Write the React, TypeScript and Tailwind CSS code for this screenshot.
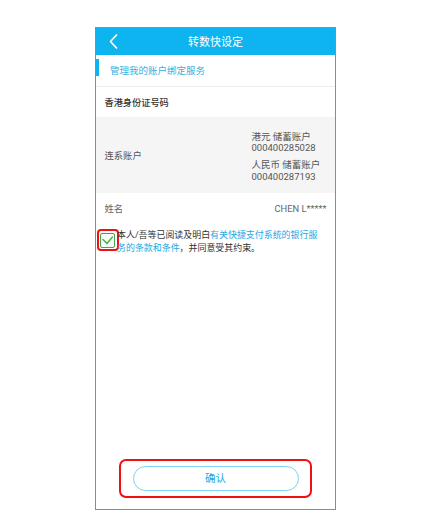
import React from "react";

export default function App() {
  return (
    <div className="w-[438px] h-[510px] bg-white pt-[27px] pl-[95px] font-[Roboto,'Noto_Sans_CJK_SC',sans-serif]">
      <div className="w-[241px] h-[483px] border-[1.5px] border-[#8c8c8c] flex flex-col bg-white">
        {/* Header */}
        <div className="h-[27px] shrink-0 bg-[#0db4ef] grid grid-cols-[1fr_auto_1fr] items-center">
          <div className="pl-[13px] flex items-center">
            <svg width="9" height="15" viewBox="0 0 9 15" fill="none">
              <path d="M7.5 1 L1.5 7.5 L7.5 14" stroke="white" strokeWidth="1.7" strokeLinecap="round" strokeLinejoin="round" />
            </svg>
          </div>
          <div className="text-white text-[11px] leading-[14px] pt-[2px]">转数快设定</div>
          <div />
        </div>

        {/* Sub header */}
        <div className="h-[32px] shrink-0 flex items-start pt-[4px] border-b border-[#ececec]">
          <div className="w-[3px] h-[17px] bg-[#0db4ef]" />
          <div className="ml-[11px] mt-[6px] text-[9.5px] leading-[12px] text-[#3aafe0]">管理我的账户绑定服务</div>
        </div>

        {/* ID row */}
        <div className="h-[30px] shrink-0 flex items-center pt-[2px] pl-[8.5px] text-[9.2px] text-[#333] font-medium">香港身份证号码</div>

        {/* Linked accounts */}
        <div className="bg-[#f5f5f5] flex items-center pl-[8.5px] pt-[13.5px] pb-[10.5px]">
          <div className="w-[147px] text-[9.3px] text-[#555]">连系账户</div>
          <div className="flex flex-col gap-[5px] text-[9.5px] leading-[11.7px] text-[#555]">
            <div>
              <div>港元 储蓄账户</div>
              <div>000400285028</div>
            </div>
            <div>
              <div>人民币 储蓄账户</div>
              <div>000400287193</div>
            </div>
          </div>
        </div>

        {/* Name row */}
        <div className="h-[30px] shrink-0 flex items-center justify-between pt-[2px] pl-[8.5px] pr-[8.5px] text-[9.3px] text-[#666]">
          <span>姓名</span>
          <span>CHEN L*****</span>
        </div>

        {/* Agreement */}
        <div className="flex items-start pt-[6.5px]">
          <div className="ml-[1px] w-[21.5px] h-[22px] border-2 border-[#ee1111] rounded-[4px] flex items-center justify-center shrink-0">
            <div className="w-[15px] h-[15px] border-[1.5px] border-[#4f9f5a] rounded-[2px] bg-[#f4fbf4] flex items-center justify-center">
              <svg width="11" height="9" viewBox="0 0 11 9" fill="none">
                <path d="M1 3.5 L5 7.5 L10.5 1" stroke="#4caf50" strokeWidth="1.5" strokeLinecap="round" strokeLinejoin="round" />
              </svg>
            </div>
          </div>
          <p className="ml-[-1.5px] mt-[-0.5px] text-[8.95px] leading-[13px] text-[#333] whitespace-nowrap">
            本人/吾等已阅读及明白<span className="text-[#1ea7e1]">有关快捷支付系统的银行服</span>
            <br />
            <span className="text-[#1ea7e1]">务的条款和条件</span>，并同意受其约束。
          </p>
        </div>

        <div className="flex-1" />

        {/* Button */}
        <div className="flex justify-center pb-[11px]">
          <div className="w-[193px] h-[39px] border-2 border-[#ee1111] rounded-[7px] flex items-center justify-center">
            <div className="w-[166px] h-[25px] rounded-full border border-[#80d3f0] flex items-center justify-center text-[10.5px] text-[#1ea7e1]">确认</div>
          </div>
        </div>
      </div>
    </div>
  );
}
